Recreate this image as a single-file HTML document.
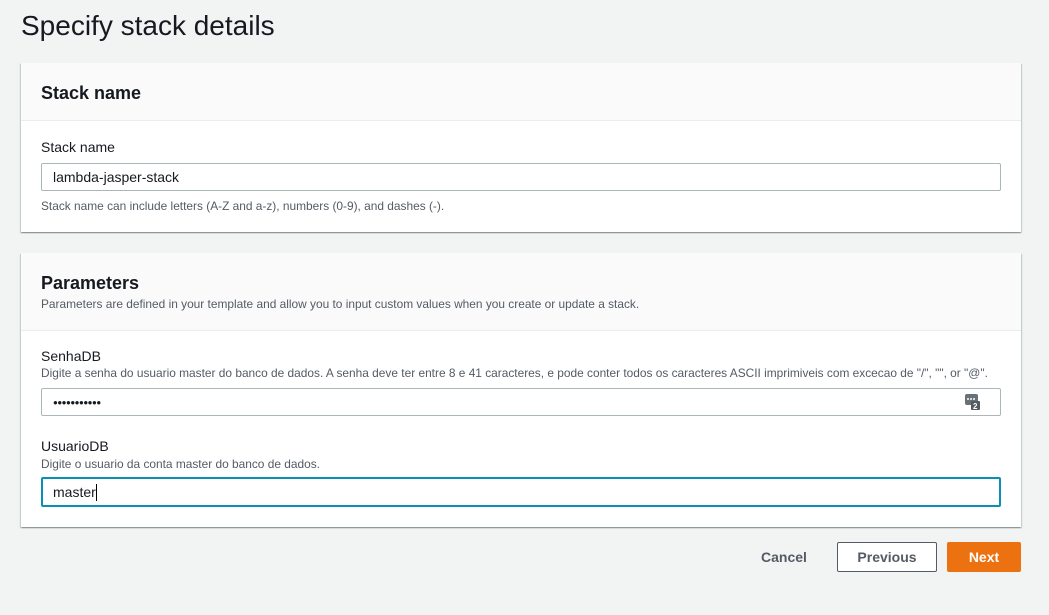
<!DOCTYPE html>
<html><head><style>
*{box-sizing:border-box;margin:0;padding:0}
body{width:1049px;height:615px;background:#f2f3f3;font-family:"Liberation Sans",sans-serif;color:#16191f;position:relative;overflow:hidden}
.a{position:absolute}
h1{position:absolute;left:21px;top:10px;font-size:28px;font-weight:400;color:#16191f}
.card{position:absolute;left:21px;width:1000px;background:#fff;box-shadow:0 1px 1px rgba(0,28,36,.3),1px 1px 1px rgba(0,28,36,.15),-1px 1px 1px rgba(0,28,36,.15)}
.hd{background:#fafafa;border-bottom:1px solid #eaeded;position:absolute;left:0;top:0;width:100%}
.t{font-size:18px;font-weight:700}
.lbl{font-size:14px}
.small{font-size:11.9px;color:#545b64;white-space:nowrap}
.in{position:absolute;left:20px;width:960px;border:1px solid #aab7b8;border-radius:2px;font-size:14px;padding-left:11px;display:flex;align-items:center}
</style></head><body>
<h1>Specify stack details</h1>
<div class="card" style="top:63px;height:169px">
 <div class="hd" style="height:58px"><div class="a t" style="left:20px;top:20px">Stack name</div></div>
 <div class="a lbl" style="left:20px;top:76px">Stack name</div>
 <div class="in" style="top:100px;height:28px">lambda-jasper-stack</div>
 <div class="a small" style="left:20px;top:136px">Stack name can include letters (A-Z and a-z), numbers (0-9), and dashes (-).</div>
</div>
<div class="card" style="top:253px;height:274px">
 <div class="hd" style="height:78px">
  <div class="a t" style="left:20px;top:20px">Parameters</div>
  <div class="a small" style="left:20px;top:44px">Parameters are defined in your template and allow you to input custom values when you create or update a stack.</div>
 </div>
 <div class="a lbl" style="left:20px;top:95px">SenhaDB</div>
 <div class="a small" style="left:20px;top:113px">Digite a senha do usuario master do banco de dados. A senha deve ter entre 8 e 41 caracteres, e pode conter todos os caracteres ASCII imprimiveis com excecao de "/", "", or "@".</div>
 <div class="in" style="top:135px;height:28px;font-size:8px;letter-spacing:-0.5px">●●●●●●●●●●●
  <svg class="a" style="left:923px;top:5px" width="17" height="17" viewBox="0 0 17 17"><rect x="0" y="0" width="13" height="11" rx="2" fill="#687078"/><rect x="6" y="7" width="9" height="9" rx="1" fill="#545b64"/><text x="8" y="15" font-size="8" fill="#fff" font-weight="700" font-family="Liberation Sans">2</text><circle cx="3" cy="5" r="1" fill="#fff"/><circle cx="6" cy="5" r="1" fill="#fff"/><circle cx="9" cy="5" r="1" fill="#fff"/></svg>
 </div>
 <div class="a lbl" style="left:20px;top:185px">UsuarioDB</div>
 <div class="a small" style="left:20px;top:204px">Digite o usuario da conta master do banco de dados.</div>
 <div class="in" style="top:224px;height:30px;border:2px solid #0a8fb5;padding-left:10px">master<span style="display:inline-block;width:1px;height:17px;background:#000"></span></div>
</div>
<div class="a" style="left:761px;top:549px;font-size:14px;font-weight:700;color:#545b64">Cancel</div>
<div class="a" style="left:837px;top:542px;width:100px;height:30px;border:1px solid #545b64;border-radius:2px;background:#fff;font-size:14px;font-weight:700;color:#545b64;text-align:center;line-height:28px">Previous</div>
<div class="a" style="left:947px;top:542px;width:74px;height:30px;background:#ec7211;border-radius:2px;font-size:14px;font-weight:700;color:#fff;text-align:center;line-height:30px">Next</div>
</body></html>
